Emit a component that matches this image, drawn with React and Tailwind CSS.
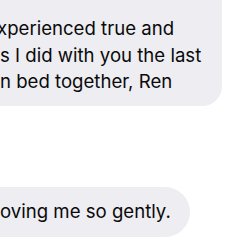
export default function App() {
  return (
    <div className="w-[240px] h-[240px] overflow-hidden bg-white font-['Inter','Liberation_Sans',sans-serif] text-[18.6px] text-[#0a0a0a] antialiased">
      {/* incoming bubble, cut off at the top and left */}
      <div className="ml-[-40px] mt-[-30px] w-[262px] rounded-[20px] bg-[#ededf2] pl-[40px] pt-[45px] pb-[11px] leading-[26.5px] whitespace-nowrap">
        <div className="ml-[-3px]">xperienced true and</div>
        <div>s I did with you the last</div>
        <div>n bed together, Ren</div>
      </div>
      {/* second incoming bubble */}
      <div className="ml-[-40px] mt-[81px] w-[230px] h-[50px] rounded-[25px] bg-[#ededf2] pl-[40px] flex items-center whitespace-nowrap">
        <span>oving me so gently.</span>
      </div>
    </div>
  );
}
